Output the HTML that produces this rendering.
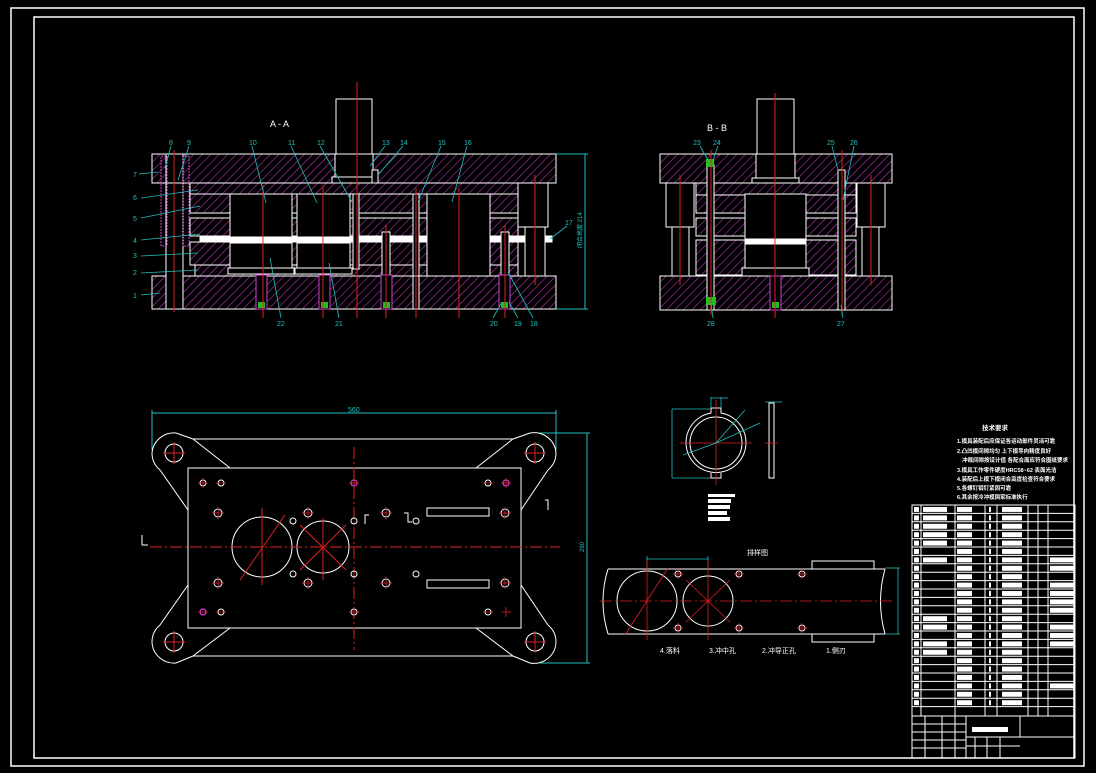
<!DOCTYPE html>
<html><head><meta charset="utf-8"><style>
html,body{margin:0;padding:0;background:#000;}
svg{display:block;}
text{font-family:"Liberation Sans","Noto Sans CJK SC",sans-serif;}
</style></head><body>
<svg width="1096" height="773" viewBox="0 0 1096 773" xmlns="http://www.w3.org/2000/svg">
<defs>
<pattern id="h" patternUnits="userSpaceOnUse" width="6" height="6" patternTransform="rotate(45)">
<rect width="6" height="6" fill="#000"/><line x1="0" y1="0" x2="0" y2="6" stroke="#c838c8" stroke-width="1.1"/>
</pattern>
<pattern id="r1" patternUnits="userSpaceOnUse" x="912" y="505" width="10" height="8.4"><rect x="2" y="2" width="5" height="5" fill="#fff"/></pattern>
<pattern id="r2" patternUnits="userSpaceOnUse" x="922" y="505" width="40" height="8.4"><rect x="1" y="2" width="24" height="5" fill="#fff"/></pattern>
<pattern id="r3" patternUnits="userSpaceOnUse" x="956" y="505" width="40" height="8.4"><rect x="1" y="2" width="15" height="5" fill="#fff"/></pattern>
<pattern id="r4" patternUnits="userSpaceOnUse" x="985" y="505" width="40" height="8.4"><rect x="4" y="2" width="2" height="5" fill="#fff"/></pattern>
<pattern id="r5" patternUnits="userSpaceOnUse" x="998" y="505" width="40" height="8.4"><rect x="4" y="2" width="20" height="5" fill="#fff"/></pattern>
<pattern id="r6" patternUnits="userSpaceOnUse" x="1049" y="505" width="40" height="8.4"><rect x="1" y="2" width="24" height="5" fill="#fff"/></pattern>
</defs>
<rect width="1096" height="773" fill="#000"/>
<rect x="11" y="8" width="1073" height="758" fill="none" stroke="#fff" stroke-width="1.5"/>
<rect x="34" y="17" width="1040" height="741" fill="none" stroke="#fff" stroke-width="1.5"/>

<!-- ===== A-A section ===== -->
<g stroke="#fff" stroke-width="1">
<text x="270" y="127" fill="#fff" font-size="9" stroke="none">A - A</text>
<rect x="336" y="99" width="36" height="55" fill="#000"/>
<rect x="152" y="154" width="404" height="29" fill="url(#h)"/>
<rect x="335" y="154" width="38" height="23" fill="#000"/>
<rect x="332" y="177" width="43" height="6" fill="#000"/>
<rect x="166" y="154" width="17" height="29" fill="#000"/>
<rect x="190" y="183" width="328" height="11" fill="url(#h)"/>
<rect x="190" y="194" width="328" height="19" fill="url(#h)"/>
<rect x="190" y="218" width="328" height="18" fill="url(#h)"/>
<rect x="200" y="236" width="352" height="6" fill="#fff"/>
<rect x="190" y="242" width="328" height="23" fill="url(#h)"/>
<rect x="195" y="265" width="323" height="11" fill="url(#h)"/>
<rect x="152" y="276" width="404" height="33" fill="url(#h)"/>
<rect x="166" y="183" width="17" height="126" fill="#000"/>
<rect x="161" y="156" width="6" height="90" fill="none" stroke="#d040d0" stroke-dasharray="2,1"/>
<rect x="183" y="156" width="6" height="90" fill="none" stroke="#d040d0" stroke-dasharray="2,1"/>
<rect x="518" y="183" width="30" height="44" fill="#000"/>
<rect x="525" y="227" width="20" height="49" fill="#000"/>
<rect x="230" y="194" width="62" height="43" fill="#000"/>
<rect x="297" y="194" width="53" height="43" fill="#000"/>
<rect x="230" y="243" width="62" height="25" fill="#000"/>
<rect x="297" y="243" width="53" height="25" fill="#000"/>
<rect x="228" y="268" width="66" height="6" fill="#000"/>
<rect x="295" y="268" width="57" height="6" fill="#000"/>
<rect x="427" y="194" width="63" height="82" fill="#000"/>
<rect x="353" y="194" width="6" height="75" fill="#000"/>
<rect x="413" y="194" width="6" height="82" fill="#000"/>
<rect x="413" y="276" width="6" height="33" fill="#000"/>
<rect x="382" y="232" width="8" height="60" fill="#000"/>
<rect x="501" y="232" width="8" height="60" fill="#000"/>
</g>
<g stroke="#d040d0" stroke-width="1" fill="#000">
<rect x="256" y="275" width="11" height="34"/><rect x="319" y="275" width="11" height="34"/>
<rect x="381" y="275" width="11" height="34"/><rect x="499" y="275" width="11" height="34"/>
</g>
<g fill="#20c020"><rect x="258" y="302" width="7" height="6"/><rect x="321" y="302" width="7" height="6"/><rect x="383" y="302" width="7" height="6"/><rect x="501" y="302" width="7" height="6"/></g>
<rect x="372" y="170" width="6" height="13" fill="#000" stroke="#fff"/>
<g stroke="#e02020" stroke-width="1">
<line x1="357" y1="82" x2="357" y2="318"/>
<line x1="174" y1="150" x2="174" y2="312"/>
<line x1="263" y1="185" x2="263" y2="318"/>
<line x1="323" y1="185" x2="323" y2="318"/>
<line x1="386" y1="225" x2="386" y2="318"/>
<line x1="416" y1="188" x2="416" y2="318"/>
<line x1="459" y1="188" x2="459" y2="318"/>
<line x1="505" y1="225" x2="505" y2="318"/>
<line x1="535" y1="175" x2="535" y2="285"/>
</g>
<g stroke="#20c0c0" stroke-width="1" fill="none">
<line x1="556" y1="154" x2="588" y2="154"/><line x1="556" y1="309" x2="588" y2="309"/>
<line x1="585" y1="154" x2="585" y2="309"/>
</g>
<text x="0" y="0" fill="#20c0c0" font-size="6" transform="translate(582,248) rotate(-90)">闭合高度 214</text>
<g stroke="#20c0c0" stroke-width="0.8">
<line x1="139" y1="174" x2="158" y2="172"/><line x1="141" y1="198" x2="198" y2="190"/>
<line x1="141" y1="218" x2="200" y2="206"/><line x1="141" y1="240" x2="200" y2="234"/>
<line x1="141" y1="256" x2="198" y2="253"/><line x1="141" y1="273" x2="198" y2="270"/>
<line x1="141" y1="295" x2="160" y2="293"/>
<line x1="171" y1="146" x2="165" y2="168"/><line x1="189" y1="146" x2="178" y2="180"/>
<line x1="252" y1="146" x2="266" y2="203"/><line x1="291" y1="146" x2="317" y2="203"/>
<line x1="320" y1="146" x2="352" y2="202"/><line x1="385" y1="146" x2="370" y2="166"/>
<line x1="403" y1="146" x2="378" y2="175"/><line x1="441" y1="146" x2="418" y2="202"/>
<line x1="467" y1="146" x2="452" y2="202"/><line x1="567" y1="226" x2="550" y2="239"/>
<line x1="281" y1="318" x2="270" y2="258"/><line x1="339" y1="318" x2="329" y2="263"/>
<line x1="493" y1="318" x2="502" y2="302"/><line x1="518" y1="318" x2="509" y2="302"/>
<line x1="533" y1="318" x2="508" y2="272"/>
</g>
<g fill="#20c0c0" font-size="7">
<text x="133" y="177">7</text><text x="133" y="200">6</text><text x="133" y="221">5</text>
<text x="133" y="243">4</text><text x="133" y="258">3</text><text x="133" y="275">2</text><text x="133" y="298">1</text>
<text x="169" y="145">8</text><text x="187" y="145">9</text><text x="249" y="145">10</text><text x="288" y="145">11</text>
<text x="317" y="145">12</text><text x="382" y="145">13</text><text x="400" y="145">14</text><text x="438" y="145">15</text>
<text x="464" y="145">16</text><text x="565" y="225">17</text>
<text x="277" y="326">22</text><text x="335" y="326">21</text><text x="490" y="326">20</text><text x="514" y="326">19</text><text x="530" y="326">18</text>
</g>

<!-- ===== B-B section ===== -->
<g stroke="#fff" stroke-width="1">
<text x="707" y="131" fill="#fff" font-size="9" stroke="none">B - B</text>
<rect x="757" y="99" width="37" height="55" fill="#000"/>
<rect x="660" y="154" width="232" height="29" fill="url(#h)"/>
<rect x="756" y="154" width="39" height="24" fill="#000"/>
<rect x="752" y="178" width="47" height="5" fill="#000"/>
<rect x="696" y="183" width="160" height="12" fill="url(#h)"/>
<rect x="696" y="195" width="160" height="18" fill="url(#h)"/>
<rect x="696" y="218" width="160" height="18" fill="url(#h)"/>
<rect x="696" y="240" width="160" height="35" fill="url(#h)"/>
<rect x="660" y="276" width="232" height="34" fill="url(#h)"/>
<rect x="666" y="183" width="28" height="44" fill="#000"/>
<rect x="672" y="227" width="17" height="49" fill="#000"/>
<rect x="857" y="183" width="28" height="44" fill="#000"/>
<rect x="862" y="227" width="17" height="49" fill="#000"/>
<rect x="745" y="194" width="61" height="74" fill="#000"/>
<rect x="745" y="239" width="61" height="5" fill="#fff"/>
<rect x="742" y="268" width="67" height="8" fill="#000"/>
<rect x="707" y="165" width="7" height="145" fill="#000"/>
<rect x="838" y="170" width="7" height="140" fill="#000"/>
</g>
<rect x="770" y="276" width="11" height="34" fill="#000" stroke="#d040d0"/>
<rect x="772" y="302" width="7" height="6" fill="#20c020"/>
<rect x="706" y="297" width="10" height="8" fill="#20c020"/>
<rect x="706" y="159" width="8" height="8" fill="#20c020"/>
<g stroke="#e02020">
<line x1="775" y1="93" x2="775" y2="318"/><line x1="680" y1="175" x2="680" y2="285"/>
<line x1="871" y1="175" x2="871" y2="285"/><line x1="711" y1="150" x2="711" y2="315"/>
<line x1="842" y1="150" x2="842" y2="315"/>
</g>
<g stroke="#20c0c0" stroke-width="0.8">
<line x1="700" y1="146" x2="708" y2="160"/><line x1="718" y1="146" x2="713" y2="160"/>
<line x1="832" y1="146" x2="838" y2="170"/><line x1="854" y1="146" x2="843" y2="200"/>
<line x1="713" y1="318" x2="711" y2="303"/><line x1="843" y1="318" x2="841" y2="305"/>
</g>
<g fill="#20c0c0" font-size="7">
<text x="693" y="145">23</text><text x="713" y="145">24</text><text x="827" y="145">25</text><text x="850" y="145">26</text>
<text x="707" y="326">28</text><text x="837" y="326">27</text>
</g>

<!-- ===== Plan view ===== -->
<g stroke="#20c0c0" stroke-width="1" fill="none">
<line x1="152" y1="413" x2="556" y2="413"/><line x1="152" y1="410" x2="152" y2="450"/><line x1="556" y1="410" x2="556" y2="450"/>
<line x1="540" y1="433" x2="590" y2="433"/><line x1="540" y1="663" x2="590" y2="663"/><line x1="587" y1="433" x2="587" y2="663"/>
</g>
<text x="348" y="412" fill="#20c0c0" font-size="7">560</text>
<text x="0" y="0" fill="#20c0c0" font-size="6" transform="translate(584,552) rotate(-90)">280</text>
<g stroke="#fff" stroke-width="1" fill="none">
<line x1="193" y1="439" x2="513" y2="439"/><line x1="193" y1="656" x2="513" y2="656"/>
<path d="M193 439 L176 433 A22 22 0 0 0 152 453 A22 22 0 0 0 160 470 L188 510"/>
<path d="M513 439 L530 433 A22 22 0 0 1 556 453 A22 22 0 0 1 548 470 L521 510"/>
<path d="M193 656 L176 663 A22 22 0 0 1 152 642 A22 22 0 0 1 160 625 L188 585"/>
<path d="M513 656 L530 663 A22 22 0 0 0 556 642 A22 22 0 0 0 548 625 L521 585"/>
<line x1="193" y1="439" x2="230" y2="468"/><line x1="513" y1="439" x2="476" y2="468"/>
<line x1="193" y1="656" x2="230" y2="628"/><line x1="513" y1="656" x2="476" y2="628"/>
<rect x="188" y="468" width="333" height="160"/>
<circle cx="174" cy="453" r="9"/><circle cx="535" cy="453" r="9"/>
<circle cx="174" cy="642" r="9"/><circle cx="535" cy="642" r="9"/>
<circle cx="262" cy="547" r="30"/><circle cx="323" cy="547" r="26"/>
<rect x="427" y="508" width="62" height="8"/><rect x="427" y="580" width="62" height="8"/>
<path d="M365 524 v-9 h4"/><path d="M404 513 h4 v9 h4"/>
</g>
<g stroke="#e02020" stroke-width="1">
<line x1="150" y1="547" x2="560" y2="547" stroke-dasharray="12,3,2,3"/>
<line x1="354" y1="447" x2="354" y2="650" stroke-dasharray="12,3,2,3"/>
<line x1="262" y1="508" x2="262" y2="585"/><line x1="323" y1="518" x2="323" y2="580"/>
<line x1="240" y1="580" x2="285" y2="515"/><line x1="300" y1="525" x2="346" y2="570"/><line x1="300" y1="570" x2="346" y2="525"/>
<line x1="163" y1="453" x2="185" y2="453"/><line x1="174" y1="442" x2="174" y2="464"/>
<line x1="524" y1="453" x2="546" y2="453"/><line x1="535" y1="442" x2="535" y2="464"/>
<line x1="163" y1="642" x2="185" y2="642"/><line x1="174" y1="631" x2="174" y2="653"/>
<line x1="524" y1="642" x2="546" y2="642"/><line x1="535" y1="631" x2="535" y2="653"/>
</g>
<g stroke="#fff" stroke-width="1" fill="none">
<circle cx="203" cy="483" r="3"/><circle cx="221" cy="483" r="3"/><circle cx="488" cy="483" r="3"/>
<circle cx="218" cy="513" r="4"/><circle cx="308" cy="513" r="4"/><circle cx="386" cy="513" r="4"/><circle cx="505" cy="513" r="4"/>
<circle cx="293" cy="521" r="3"/><circle cx="354" cy="521" r="3"/><circle cx="416" cy="521" r="3"/>
<circle cx="293" cy="574" r="3"/><circle cx="354" cy="574" r="3"/><circle cx="416" cy="574" r="3"/>
<circle cx="218" cy="583" r="4"/><circle cx="308" cy="583" r="4"/><circle cx="386" cy="583" r="4"/><circle cx="505" cy="583" r="4"/>
<circle cx="221" cy="612" r="3"/><circle cx="354" cy="612" r="3"/><circle cx="488" cy="612" r="3"/>
</g>
<g stroke="#e040e0" stroke-width="1.2" fill="none">
<circle cx="354" cy="483" r="3"/><circle cx="506" cy="483" r="3"/><circle cx="203" cy="612" r="3"/>
</g>
<g stroke="#e02020" stroke-width="0.8">
<path d="M198 483h10M203 478v10M216 483h10M349 483h10M354 478v10M483 483h10M501 483h10M506 478v10"/>
<path d="M212 513h12M218 507v12M302 513h12M308 507v12M380 513h12M386 507v12M499 513h12M505 507v12"/>
<path d="M212 583h12M218 577v12M302 583h12M308 577v12M380 583h12M386 577v12M499 583h12M505 577v12"/>
<path d="M198 612h10M216 612h10M349 612h10M354 607v10M483 612h10M501 612h10M506 607v10"/>
</g>
<g stroke="#fff" fill="none"><path d="M142 535v10h6M548 510v-10h-3"/></g>

<!-- ===== part drawing ===== -->
<g stroke="#fff" stroke-width="1" fill="none">
<circle cx="716" cy="443" r="26"/>
<path d="M711 413 A30 30 0 1 0 721 413 v-5 h-10 z"/>
<path d="M711 473 v5 h10 v-5"/>
<rect x="769" y="403" width="5" height="75"/>
</g>
<g stroke="#e02020" stroke-width="0.8">
<line x1="680" y1="443" x2="752" y2="443"/><line x1="716" y1="400" x2="716" y2="485"/><line x1="765" y1="443" x2="778" y2="443"/>
</g>
<g stroke="#20c0c0" stroke-width="0.8" fill="none">
<line x1="672" y1="409" x2="710" y2="409"/><line x1="672" y1="478" x2="710" y2="478"/><line x1="672" y1="409" x2="672" y2="478"/>
<line x1="716" y1="443" x2="745" y2="410"/><line x1="716" y1="443" x2="760" y2="423"/><line x1="716" y1="443" x2="683" y2="455"/>
<line x1="711" y1="397" x2="711" y2="408"/><line x1="721" y1="397" x2="721" y2="408"/><line x1="711" y1="398" x2="728" y2="398"/>
<line x1="765" y1="402" x2="782" y2="402"/>
</g>
<g fill="#fff"><rect x="708" y="494" width="27" height="3"/><rect x="708" y="499" width="23" height="4"/><rect x="708" y="505" width="22" height="4"/><rect x="708" y="511" width="19" height="4"/><rect x="708" y="517" width="22" height="4"/></g>

<!-- strip layout -->
<text x="747" y="555" fill="#fff" font-size="7">排样图</text>
<g stroke="#20c0c0" stroke-width="0.8" fill="none">
<line x1="647" y1="559" x2="708" y2="559"/><line x1="647" y1="556" x2="647" y2="570"/><line x1="708" y1="556" x2="708" y2="570"/>
<line x1="885" y1="568" x2="900" y2="568"/><line x1="885" y1="634" x2="900" y2="634"/><line x1="898" y1="568" x2="898" y2="634"/>
</g>
<g stroke="#fff" stroke-width="1" fill="none">
<path d="M608 569 H885 M608 634 H885"/>
<path d="M608 569 Q598 601 608 634"/><path d="M885 569 Q876 601 885 634"/>
<rect x="812" y="561" width="62" height="8"/><rect x="812" y="634" width="62" height="8"/>
<circle cx="647" cy="601" r="30"/><circle cx="708" cy="601" r="25"/>
<circle cx="678" cy="574" r="3"/><circle cx="739" cy="574" r="3"/><circle cx="802" cy="574" r="3"/>
<circle cx="678" cy="628" r="3"/><circle cx="739" cy="628" r="3"/><circle cx="802" cy="628" r="3"/>
</g>
<g stroke="#e02020" stroke-width="0.8">
<line x1="600" y1="601" x2="895" y2="601" stroke-dasharray="12,3,2,3"/>
<line x1="647" y1="560" x2="647" y2="640"/><line x1="708" y1="560" x2="708" y2="640"/>
<line x1="625" y1="635" x2="668" y2="568"/><line x1="686" y1="580" x2="730" y2="622"/><line x1="686" y1="622" x2="730" y2="580"/>
<path d="M673 574h10M678 569v10M734 574h10M739 569v10M797 574h10M802 569v10M673 628h10M678 623v10M734 628h10M739 623v10M797 628h10M802 623v10"/>
</g>
<g fill="#fff" font-size="7">
<text x="660" y="653">4.落料</text><text x="709" y="653">3.冲中孔</text><text x="762" y="653">2.冲导正孔</text><text x="826" y="653">1.侧刃</text>
</g>

<!-- tech requirements -->
<g fill="#fff" font-size="5.5" font-weight="bold">
<text x="982" y="430" font-size="6.5">技术要求</text>
<text x="957" y="443">1.模具装配后应保证各运动部件灵活可靠</text>
<text x="957" y="453">2.凸凹模间隙均匀  上下模导向精度良好</text>
<text x="962" y="462">冲裁间隙按设计值 各配合面应符合图纸要求</text>
<text x="957" y="472">3.模具工作零件硬度HRC58~62 表面光洁</text>
<text x="957" y="481">4.装配后上模下模闭合高度检查符合要求</text>
<text x="957" y="490">5.各螺钉销钉紧固可靠</text>
<text x="957" y="499">6.其余按冷冲模国家标准执行</text>
</g>

<!-- title block -->
<rect x="912" y="505" width="9" height="201.6" fill="url(#r1)"/>
<rect x="922" y="505" width="32" height="42" fill="url(#r2)"/>
<rect x="922" y="555.4" width="32" height="8.4" fill="url(#r2)"/>
<rect x="922" y="614.2" width="32" height="16.8" fill="url(#r2)"/>
<rect x="922" y="639.4" width="32" height="16.8" fill="url(#r2)"/>
<rect x="956" y="505" width="28" height="201.6" fill="url(#r3)"/>
<rect x="985" y="505" width="11" height="201.6" fill="url(#r4)"/>
<rect x="998" y="505" width="29" height="201.6" fill="url(#r5)"/>
<rect x="1049" y="555.4" width="26" height="16.8" fill="url(#r6)"/>
<rect x="1049" y="580.6" width="26" height="33.6" fill="url(#r6)"/>
<rect x="1049" y="622.6" width="26" height="25.2" fill="url(#r6)"/>
<rect x="1049" y="681.4" width="26" height="8.4" fill="url(#r6)"/>
<g stroke="#fff" stroke-width="1" fill="none">
<rect x="912" y="505" width="163" height="253"/>
<path d="M921 505V716M955 505V716M985 505V716M997 505V716M1028 505V716M1038 505V716M1048 505V716"/>
<path d="M912 513.4H1075M912 521.8H1075M912 530.2H1075M912 538.6H1075M912 547H1075M912 555.4H1075M912 563.8H1075M912 572.2H1075M912 580.6H1075M912 589H1075M912 597.4H1075M912 605.8H1075M912 614.2H1075M912 622.6H1075M912 631H1075M912 639.4H1075M912 647.8H1075M912 656.2H1075M912 664.6H1075M912 673H1075M912 681.4H1075M912 689.8H1075M912 698.2H1075M912 706.6H1075M912 716H1075"/>
<path d="M966 716V758M966 737H1075M1020 716V737M912 724H966M912 732H966M912 740H966M912 748H966M925 716V758M942 716V758M955 716V758M966 746H1020M975 737V758M987 737V758M1000 737V758"/>
</g>
<rect x="972" y="727" width="36" height="5" fill="#fff"/>
</svg>
</body></html>
